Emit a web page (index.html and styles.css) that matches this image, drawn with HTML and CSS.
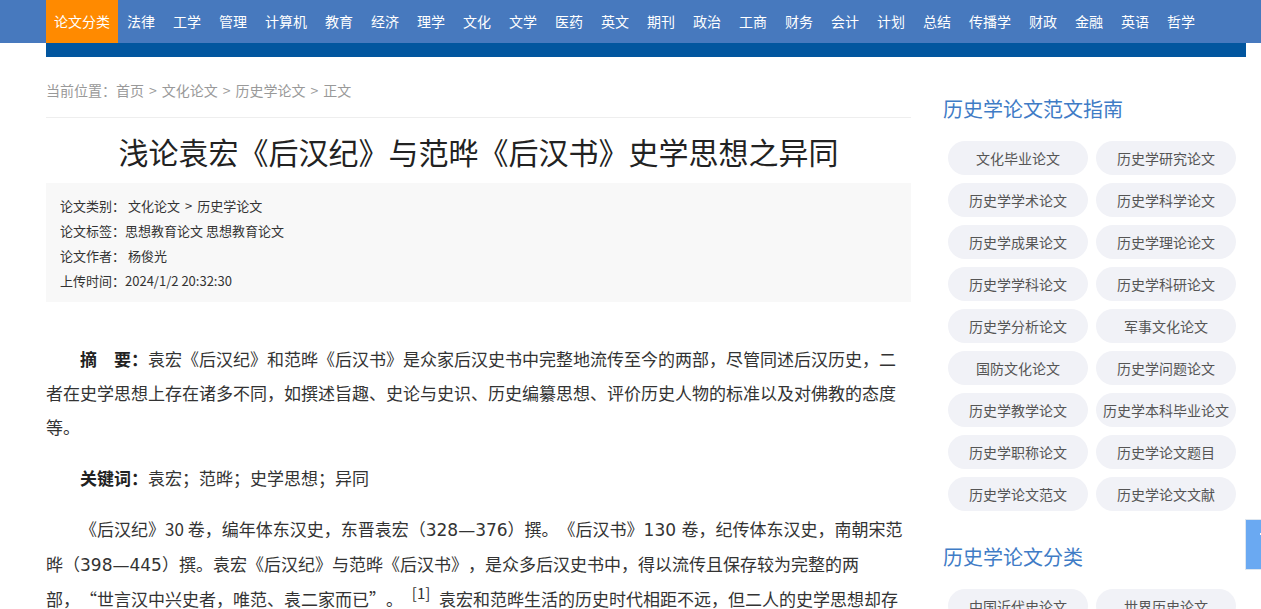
FILE: index.html
```html
<!DOCTYPE html>
<html lang="zh-CN">
<head>
<meta charset="utf-8">
<title>浅论袁宏《后汉纪》与范晔《后汉书》史学思想之异同</title>
<link rel="stylesheet" href="styles.css">
</head>
<body>
<header class="topnav">
  <nav class="nav-inner">
    <a class="nav-item active">论文分类</a>
    <a class="nav-item">法律</a>
    <a class="nav-item">工学</a>
    <a class="nav-item">管理</a>
    <a class="nav-item">计算机</a>
    <a class="nav-item">教育</a>
    <a class="nav-item">经济</a>
    <a class="nav-item">理学</a>
    <a class="nav-item">文化</a>
    <a class="nav-item">文学</a>
    <a class="nav-item">医药</a>
    <a class="nav-item">英文</a>
    <a class="nav-item">期刊</a>
    <a class="nav-item">政治</a>
    <a class="nav-item">工商</a>
    <a class="nav-item">财务</a>
    <a class="nav-item">会计</a>
    <a class="nav-item">计划</a>
    <a class="nav-item">总结</a>
    <a class="nav-item">传播学</a>
    <a class="nav-item">财政</a>
    <a class="nav-item">金融</a>
    <a class="nav-item">英语</a>
    <a class="nav-item">哲学</a>
  </nav>
</header>
<div class="subbar"></div>

<div class="page">
  <main class="article">
    <div class="crumb">当前位置：<a>首页</a><span class="sep">&gt;</span><a>文化论文</a><span class="sep">&gt;</span><a>历史学论文</a><span class="sep">&gt;</span><span>正文</span></div>
    <h1 class="title">浅论袁宏《后汉纪》与范晔《后汉书》史学思想之异同</h1>
    <div class="info">
      <p>论文类别： <a>文化论文</a><span class="sep">&gt;</span><a>历史学论文</a></p>
      <p>论文标签：<a>思想教育论文</a> <a>思想教育论文</a></p>
      <p>论文作者： 杨俊光</p>
      <p>上传时间：2024/1/2 20:32:30</p>
    </div>
    <div class="content">
      <p><b>摘　要：</b>袁宏《后汉纪》和范晔《后汉书》是众家后汉史书中完整地流传至今的两部，尽管同述后汉历史，二者在史学思想上存在诸多不同，如撰述旨趣、史论与史识、历史编纂思想、评价历史人物的标准以及对佛教的态度等。</p>
      <p><b>关键词：</b>袁宏；范晔；史学思想；异同</p>
      <p>《后汉纪》30 卷，编年体东汉史，东晋袁宏（<span class="num">328—376</span>）撰。《后汉书》<span class="num">130 </span>卷，纪传体东汉史，南朝宋范晔（<span class="num">398—445</span>）撰。袁宏《后汉纪》与范晔《后汉书》，是众多后汉史书中，得以流传且保存较为完整的两<span class="nowrap">部，“世</span>言汉中兴史者，唯范、袁二家而已”。 <sup>[1]</sup> 袁宏和范晔生活的历史时代相距不远，但二人的史学思想却存在明显的差异。</p>
    </div>
  </main>

  <aside class="sidebar">
    <h2 class="side-title">历史学论文范文指南</h2>
    <div class="tags">
      <a class="tag">文化毕业论文</a>
      <a class="tag">历史学研究论文</a>
      <a class="tag">历史学学术论文</a>
      <a class="tag">历史学科学论文</a>
      <a class="tag">历史学成果论文</a>
      <a class="tag">历史学理论论文</a>
      <a class="tag">历史学学科论文</a>
      <a class="tag">历史学科研论文</a>
      <a class="tag">历史学分析论文</a>
      <a class="tag">军事文化论文</a>
      <a class="tag">国防文化论文</a>
      <a class="tag">历史学问题论文</a>
      <a class="tag">历史学教学论文</a>
      <a class="tag">历史学本科毕业论文</a>
      <a class="tag">历史学职称论文</a>
      <a class="tag">历史学论文题目</a>
      <a class="tag">历史学论文范文</a>
      <a class="tag">历史学论文文献</a>
    </div>
    <h2 class="side-title second">历史学论文分类</h2>
    <div class="tags">
      <a class="tag">中国近代史论文</a>
      <a class="tag">世界历史论文</a>
      <a class="tag">中国古代史论文</a>
      <a class="tag">历史学理论论文</a>
    </div>
  </aside>
</div>

<a class="gotop"><span class="gotop-mark"></span></a>
</body>
</html>
```

FILE: styles.css
```css
html {
  scrollbar-width: none;
}
* {
  box-sizing: border-box;
}
body {
  margin: 0;
  font-family: "Noto Sans CJK SC", "Noto Sans", sans-serif;
  color: #333;
  background: #fff;
}
a {
  color: inherit;
  text-decoration: none;
}
p, h1, h2 {
  margin: 0;
}

/* top navigation */
.topnav {
  background: #4779be;
  height: 43px;
}
.nav-inner {
  width: 1200px;
  margin-left: 46px;
  display: flex;
  height: 43px;
}
.nav-item {
  display: block;
  padding: 0 9px;
  line-height: 43px;
  font-size: 14px;
  color: #fff;
  white-space: nowrap;
}
.nav-item.active {
  width: 72px;
  padding: 0;
  text-align: center;
  background: #ff8a00;
}
.subbar {
  width: 1200px;
  margin-left: 46px;
  height: 14px;
  background: #02569f;
}

/* page */
.page {
  width: 1200px;
  margin-left: 46px;
  display: flex;
  gap: 32px;
  align-items: flex-start;
}
.article {
  width: 865px;
  flex: none;
}
.crumb {
  margin-top: 23px;
  padding-bottom: 17px;
  border-bottom: 1px solid #eeeeee;
  font-size: 14px;
  line-height: 20px;
  color: #999;
}
.crumb .sep {
  margin: 0 5px;
}
.title {
  margin: 13px 0 12px;
  font-size: 30px;
  line-height: 40px;
  font-weight: 400;
  color: #222;
  text-align: center;
}
.info {
  background: #f8f8f8;
  padding: 10px 14px 9px;
  font-size: 13px;
  line-height: 25px;
  color: #333;
}
.info .sep {
  margin: 0 5px;
}
.content {
  padding-top: 40px;
  font-size: 17px;
  line-height: 34px;
  color: #333;
  text-spacing-trim: space-all;
}
.content p {
  text-indent: 2em;
  margin-bottom: 17px;
}
.content b {
  color: #222;
}
.content .num {
  font-family: "DejaVu Sans", "Noto Sans CJK SC", sans-serif;
}
.content .nowrap {
  white-space: nowrap;
}
.content sup {
  font-size: 15px;
  line-height: 0;
  padding: 0 5px;
}

/* sidebar */
.sidebar {
  width: 303px;
  flex: none;
  padding-top: 32px;
}
.side-title {
  font-size: 20px;
  line-height: 40px;
  font-weight: 400;
  color: #3f7cc6;
  margin-bottom: 12px;
}
.side-title.second {
  margin-top: 26px;
}
.tags {
  display: grid;
  grid-template-columns: 140px 140px;
  gap: 8px;
  padding-left: 5px;
}
.tag {
  display: block;
  height: 34px;
  line-height: 34px;
  border-radius: 17px;
  background: #f1f2f7;
  color: #555;
  font-size: 14px;
  text-align: center;
  white-space: nowrap;
}

/* go-top floating button */
.gotop {
  position: fixed;
  left: 1245px;
  top: 519px;
  width: 50px;
  height: 51px;
  background: #6aa9f2;
  border: 1px solid #dde6f0;
}
.gotop-mark {
  position: absolute;
  left: 14px;
  top: 13px;
  width: 2px;
  height: 2px;
  background: #fff;
}
```
